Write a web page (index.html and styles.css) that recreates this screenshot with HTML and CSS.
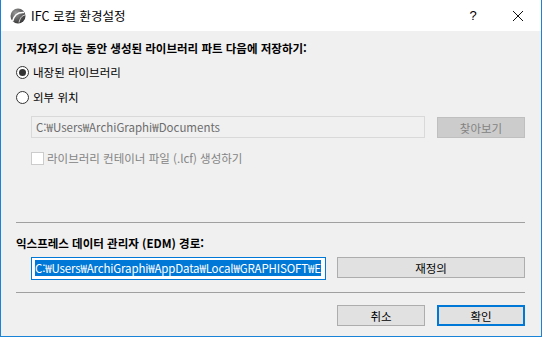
FILE: index.html
```html
<!DOCTYPE html>
<html lang="ko">

<head>
    <meta charset="UTF-8">
    <title>IFC 로컬 환경설정</title>
    <link rel="stylesheet" href="styles.css">
</head>

<body>
    <div class="window">
        <header class="titlebar">
            <svg class="app-icon" width="16" height="16" viewBox="0 0 16 16">
                <defs>
                    <radialGradient id="ball" cx="0.35" cy="0.3" r="0.8">
                        <stop offset="0" stop-color="#9a9a9a"/>
                        <stop offset="1" stop-color="#2e2e2e"/>
                    </radialGradient>
                </defs>
                <circle cx="8" cy="8" r="7.5" fill="url(#ball)"/>
                <path d="M2.5 13.5 C4 7 8 4 14 4.5" fill="none" stroke="#fff" stroke-width="1.6"/>
                <path d="M9 14.5 C10 10 12 7.5 15 7" fill="none" stroke="#d8d8d8" stroke-width="1"/>
            </svg>
            <span class="title">IFC 로컬 환경설정</span>
            <span class="title-btn help">?</span>
            <span class="title-btn close">
                <svg width="12" height="12" viewBox="0 0 12 12">
                    <path d="M1 1 L11 11 M11 1 L1 11" stroke="#111" stroke-width="1"/>
                </svg>
            </span>
        </header>

        <main class="content">
            <h2 class="label heading">가져오기 하는 동안 생성된 라이브러리 파트 다음에 저장하기:</h2>

            <label class="radio-row first">
                <span class="radio checked"></span>
                <span>내장된 라이브러리</span>
            </label>
            <label class="radio-row second">
                <span class="radio"></span>
                <span>외부 위치</span>
            </label>

            <div class="field-row browse-row">
                <div class="field disabled wide">C:₩Users₩ArchiGraphi₩Documents</div>
                <button class="btn disabled small">찾아보기</button>
            </div>

            <label class="check-row">
                <span class="checkbox"></span>
                <span>라이브러리 컨테이너 파일 (.lcf) 생성하기</span>
            </label>

            <hr class="sep first-sep">

            <h2 class="label edm">익스프레스 데이터 관리자 (EDM) 경로:</h2>

            <div class="field-row edm-row">
                <div class="field focused"><span class="selected">C:₩Users₩ArchiGraphi₩AppData₩Local₩GRAPHISOFT₩E</span></div>
                <button class="btn big">재정의</button>
            </div>

            <hr class="sep second-sep">

            <div class="actions">
                <button class="btn small">취소</button>
                <button class="btn small default">확인</button>
            </div>
        </main>
    </div>
</body>

</html>
```

FILE: styles.css
```css
* {
    box-sizing: border-box;
    padding: 0;
    margin: 0;
}

body {
    font-family: "Noto Sans CJK KR", "Noto Sans", sans-serif;
    font-size: 11.5px;
    color: #000;
    background: #fff;
}

.window {
    width: 542px;
    height: 337px;
    border: 1px solid #1883d7;
    border-top: none;
    background: #f0f0f0;
    display: flex;
    flex-direction: column;
}

.titlebar {
    height: 31px;
    background: #fff;
    display: flex;
    align-items: center;
    padding-left: 9px;
}

.app-icon {
    flex: none;
}

.title {
    margin-left: 5px;
    font-size: 12.5px;
    flex: 1;
}

.title-btn {
    width: 46px;
    height: 31px;
    display: flex;
    align-items: center;
    justify-content: center;
}

.help {
    font-size: 13px;
    font-family: "Liberation Sans", sans-serif;
}

.close {
    width: 45px;
    padding-right: 2px;
}

.content {
    padding: 0 16px 0 15px;
    display: flex;
    flex-direction: column;
}

.label {
    font-size: 11.5px;
    font-weight: bold;
    line-height: 17px;
}

.heading {
    margin-top: 9px;
}

.radio-row,
.check-row {
    display: flex;
    align-items: center;
    gap: 4px;
    height: 16px;
    line-height: 16px;
}

.radio-row.first {
    margin-top: 7px;
}

.radio-row.second {
    margin-top: 9px;
}

.radio {
    width: 13px;
    height: 13px;
    border: 1px solid #333;
    border-radius: 50%;
    background: #fff;
    display: flex;
    align-items: center;
    justify-content: center;
}

.radio.checked::after {
    content: "";
    width: 7px;
    height: 7px;
    border-radius: 50%;
    background: #333;
}

.field-row {
    display: flex;
    align-items: flex-start;
    padding-left: 15px;
}

.browse-row {
    margin-top: 11px;
    gap: 12px;
}

.field {
    height: 22px;
    padding: 0 4px;
    line-height: 20px;
    white-space: nowrap;
    overflow: hidden;
    border: 1px solid #d9d9d9;
}

.field.wide {
    width: 394px;
}

.field.disabled {
    color: #6d6d6d;
    background: #f0f0f0;
}

.btn {
    font-family: inherit;
    font-size: 11.5px;
    height: 21px;
    border: 1px solid #adadad;
    background: #e1e1e1;
    color: #000;
}

.btn.small {
    width: 88px;
}

.btn.big {
    width: 188px;
}

.btn.disabled {
    margin-top: 1px;
    background: #cccccc;
    border-color: #bfbfbf;
    color: #838383;
}

.btn.default {
    border: 2px solid #0078d7;
}

.check-row {
    margin-top: 12px;
    padding-left: 15px;
    color: #838383;
    gap: 3px;
}

.checkbox {
    width: 13px;
    height: 13px;
    border: 1px solid #cccccc;
    background: #fff;
}

.sep {
    border: none;
    border-top: 1px solid #a0a0a0;
}

.first-sep {
    margin-top: 56px;
}

.edm {
    margin-top: 12px;
}

.edm-row {
    margin-top: 5px;
    gap: 11px;
}

.field.focused {
    width: 295px;
    height: 23px;
    border: 1px solid #0078d7;
    background: #fff;
    padding: 0 3px;
}

.selected {
    background: #0078d7;
    color: #fff;
    letter-spacing: -0.15px;
}

.second-sep {
    margin-top: 12px;
}

.actions {
    margin-top: 12px;
    display: flex;
    justify-content: flex-end;
    gap: 12px;
}
```
